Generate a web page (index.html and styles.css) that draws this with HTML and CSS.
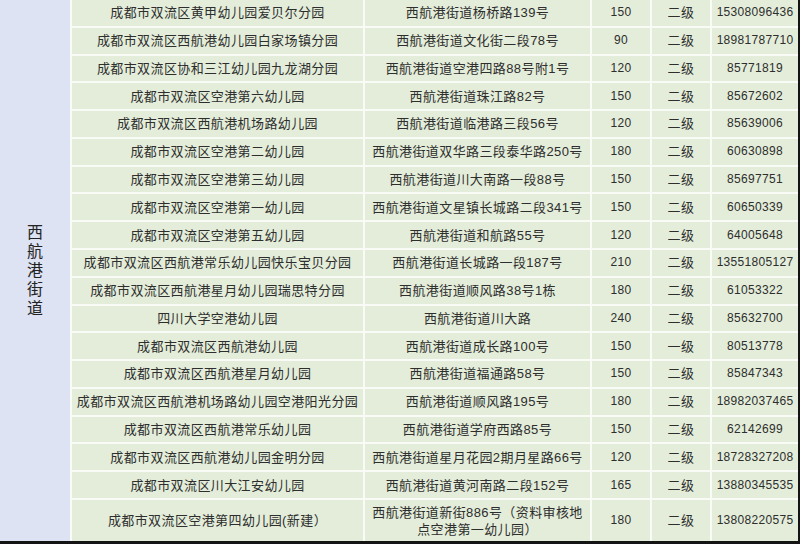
FILE: index.html
```html
<!DOCTYPE html>
<html lang="zh-CN">
<head>
<meta charset="utf-8">
<link rel="stylesheet" href="styles.css">
</head>
<body>
<div class="page">
  <div class="grid">
    <div class="cell street"><span class="street-text">西航港街道</span></div>

    <div class="cell">成都市双流区黄甲幼儿园爱贝尔分园</div><div class="cell">西航港街道杨桥路139号</div><div class="cell num">150</div><div class="cell">二级</div><div class="cell num">15308096436</div>
    <div class="cell">成都市双流区西航港幼儿园白家场镇分园</div><div class="cell">西航港街道文化街二段78号</div><div class="cell num">90</div><div class="cell">二级</div><div class="cell num">18981787710</div>
    <div class="cell">成都市双流区协和三江幼儿园九龙湖分园</div><div class="cell">西航港街道空港四路88号附1号</div><div class="cell num">120</div><div class="cell">二级</div><div class="cell num">85771819</div>
    <div class="cell">成都市双流区空港第六幼儿园</div><div class="cell">西航港街道珠江路82号</div><div class="cell num">150</div><div class="cell">二级</div><div class="cell num">85672602</div>
    <div class="cell">成都市双流区西航港机场路幼儿园</div><div class="cell">西航港街道临港路三段56号</div><div class="cell num">120</div><div class="cell">二级</div><div class="cell num">85639006</div>
    <div class="cell">成都市双流区空港第二幼儿园</div><div class="cell">西航港街道双华路三段泰华路250号</div><div class="cell num">180</div><div class="cell">二级</div><div class="cell num">60630898</div>
    <div class="cell">成都市双流区空港第三幼儿园</div><div class="cell">西航港街道川大南路一段88号</div><div class="cell num">150</div><div class="cell">二级</div><div class="cell num">85697751</div>
    <div class="cell">成都市双流区空港第一幼儿园</div><div class="cell">西航港街道文星镇长城路二段341号</div><div class="cell num">150</div><div class="cell">二级</div><div class="cell num">60650339</div>
    <div class="cell">成都市双流区空港第五幼儿园</div><div class="cell">西航港街道和航路55号</div><div class="cell num">120</div><div class="cell">二级</div><div class="cell num">64005648</div>
    <div class="cell">成都市双流区西航港常乐幼儿园快乐宝贝分园</div><div class="cell">西航港街道长城路一段187号</div><div class="cell num">210</div><div class="cell">二级</div><div class="cell num">13551805127</div>
    <div class="cell">成都市双流区西航港星月幼儿园瑞思特分园</div><div class="cell">西航港街道顺风路38号1栋</div><div class="cell num">180</div><div class="cell">二级</div><div class="cell num">61053322</div>
    <div class="cell">四川大学空港幼儿园</div><div class="cell">西航港街道川大路</div><div class="cell num">240</div><div class="cell">二级</div><div class="cell num">85632700</div>
    <div class="cell">成都市双流区西航港幼儿园</div><div class="cell">西航港街道成长路100号</div><div class="cell num">150</div><div class="cell">一级</div><div class="cell num">80513778</div>
    <div class="cell">成都市双流区西航港星月幼儿园</div><div class="cell">西航港街道福通路58号</div><div class="cell num">150</div><div class="cell">二级</div><div class="cell num">85847343</div>
    <div class="cell">成都市双流区西航港机场路幼儿园空港阳光分园</div><div class="cell">西航港街道顺风路195号</div><div class="cell num">180</div><div class="cell">二级</div><div class="cell num">18982037465</div>
    <div class="cell">成都市双流区西航港常乐幼儿园</div><div class="cell">西航港街道学府西路85号</div><div class="cell num">150</div><div class="cell">二级</div><div class="cell num">62142699</div>
    <div class="cell">成都市双流区西航港幼儿园金明分园</div><div class="cell">西航港街道星月花园2期月星路66号</div><div class="cell num">120</div><div class="cell">二级</div><div class="cell num">18728327208</div>
    <div class="cell">成都市双流区川大江安幼儿园</div><div class="cell">西航港街道黄河南路二段152号</div><div class="cell num">165</div><div class="cell">二级</div><div class="cell num">13880345535</div>
    <div class="cell">成都市双流区空港第四幼儿园(新建）</div><div class="cell two">西航港街道新街886号（资料审核地<br>点空港第一幼儿园）</div><div class="cell num">180</div><div class="cell">二级</div><div class="cell num">13808220575</div>
  </div>
</div>
</body>
</html>
```

FILE: styles.css
```css
html, body {
  margin: 0;
  padding: 0;
  background: #111;
}

.page {
  width: 800px;
  height: 544px;
  background: #141414;
  overflow: hidden;
}

.grid {
  width: 798px;
  height: 541px;
  display: grid;
  grid-template-columns: 70px 291px 225px 58px 58px 86px;
  grid-template-rows: repeat(18, 1fr) 41px;
  gap: 2px;
  background: #f9fbf6;
  font-family: "Liberation Sans", "Noto Sans CJK SC", sans-serif;
  font-size: 13px;
  letter-spacing: 0.4px;
  color: #2e2e2e;
}

.cell {
  background: #e3edd9;
  display: flex;
  align-items: center;
  justify-content: center;
  text-align: center;
  white-space: nowrap;
  line-height: 17px;
}

.street {
  grid-row: 1 / -1;
  background: #dde3f3;
}

.street-text {
  display: block;
  width: 1em;
  font-size: 16px;
  line-height: 19px;
  white-space: normal;
  letter-spacing: 0;
  color: #222;
}

.num {
  font-size: 12px;
  letter-spacing: 0.3px;
}

.two {
  white-space: normal;
}
```
